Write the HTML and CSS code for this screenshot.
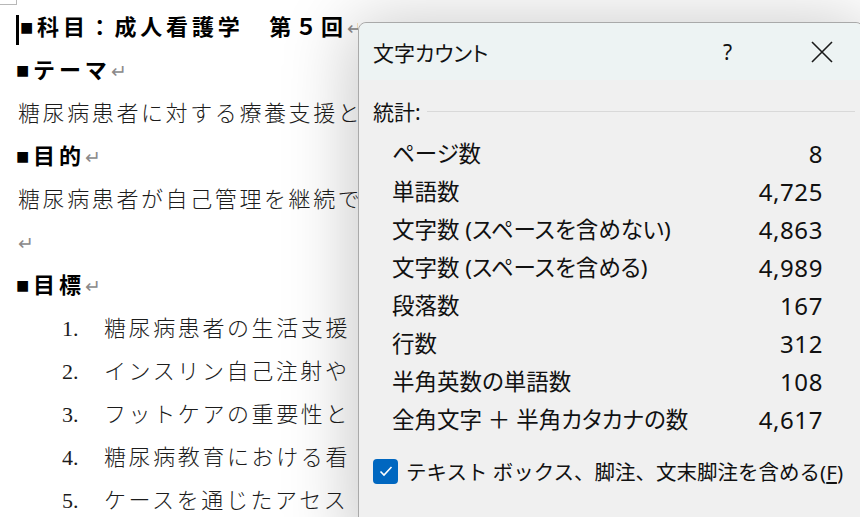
FILE: index.html
```html
<!DOCTYPE html>
<html>
<head>
  <title>文字カウント</title>
  <link rel="stylesheet" href="styles.css">
</head>
<body>
  <div id="document">
    <div class="crop-mark"></div>
    <p class="line heading"><span class="caret"></span>■科目：成人看護学　第５回<span class="pm">↵</span></p>
    <p class="line heading">■テーマ<span class="pm">↵</span></p>
    <p class="line">糖尿病患者に対する療養支援と</p>
    <p class="line heading">■目的<span class="pm">↵</span></p>
    <p class="line">糖尿病患者が自己管理を継続で</p>
    <p class="line"><span class="pm">↵</span></p>
    <p class="line heading">■目標<span class="pm">↵</span></p>
    <ol class="goals">
      <li class="line"><span class="num">1.</span>糖尿病患者の生活支援</li>
      <li class="line"><span class="num">2.</span>インスリン自己注射や</li>
      <li class="line"><span class="num">3.</span>フットケアの重要性と</li>
      <li class="line"><span class="num">4.</span>糖尿病教育における看</li>
      <li class="line"><span class="num">5.</span>ケースを通じたアセス</li>
    </ol>
  </div>

  <div id="dialog">
    <div class="titlebar">
      <span class="title">文字カウント</span>
      <span class="help">?</span>
      <svg class="close" width="24" height="24" viewBox="0 0 24 24">
        <path d="M2 2 L22 22 M22 2 L2 22" stroke="#1a1a1a" stroke-width="1.6" fill="none"/>
      </svg>
    </div>
    <div class="dialog-body">
      <div class="group-head"><span>統計:</span><div class="rule"></div></div>
      <ul class="stats">
        <li><span>ページ数</span><span class="val">8</span></li>
        <li><span>単語数</span><span class="val">4,725</span></li>
        <li><span>文字数 (スペースを含めない)</span><span class="val">4,863</span></li>
        <li><span>文字数 (スペースを含める)</span><span class="val">4,989</span></li>
        <li><span>段落数</span><span class="val">167</span></li>
        <li><span>行数</span><span class="val">312</span></li>
        <li><span>半角英数の単語数</span><span class="val">108</span></li>
        <li><span>全角文字 ＋ 半角カタカナの数</span><span class="val">4,617</span></li>
      </ul>
      <label class="check">
        <span class="box">
          <svg width="14" height="12" viewBox="0 0 14 12"><path d="M1.5 6.5 L5 10 L12.5 2" stroke="#fff" stroke-width="1.6" fill="none"/></svg>
        </span>
        <span class="check-text">テキスト ボックス、脚注、文末脚注を含める(<u>F</u>)</span>
      </label>
    </div>
  </div>
</body>
</html>
```

FILE: styles.css
```css
/* page behind the dialog */
body {
  margin: 0;
  padding: 0;
  width: 860px;
  height: 517px;
  overflow: hidden;
  position: relative;
  background-color: #ffffff;
  font-family: "Liberation Serif", "Noto Sans CJK JP", serif;
}

#document {
  width: 342px;
  height: 517px;
  overflow: hidden;
  padding: 6px 0 0 16px;
  color: #1c1c1c;
}

.crop-mark {
  position: absolute;
  left: -1px;
  top: -1px;
  width: 16px;
  height: 4px;
  border: 1px solid #b8b8b8;
}

.line {
  margin: 0;
  height: 43px;
  line-height: 43px;
  font-size: 22px;
  letter-spacing: 2.6px;
  white-space: nowrap;
  font-weight: 300;
}

.line:not(.heading) {
  padding-left: 2px;
}

.heading {
  font-weight: bold;
  color: #000;
  letter-spacing: 3.8px;
}

.caret {
  display: inline-block;
  width: 3px;
  height: 30px;
  margin-right: 1px;
  background-color: #000;
  vertical-align: middle;
}

.pm {
  color: #8a8a8a;
  font-size: 19px;
  font-weight: normal;
  letter-spacing: 0;
}

.goals {
  list-style: none;
  margin: 0;
  padding: 0 0 0 44px;
}

.goals .num {
  display: inline-block;
  width: 42px;
  letter-spacing: 0;
  font-family: "Liberation Serif", serif;
}

/* word count dialog */
#dialog {
  position: absolute;
  left: 358px;
  top: 22px;
  width: 504px;
  height: 520px;
  background-color: #f0f0f0;
  border: 1px solid #a9a9a9;
  border-radius: 8px;
  box-shadow: 0 6px 70px 6px rgba(0, 0, 0, 0.22);
  font-family: "Noto Sans", "Noto Sans CJK JP", sans-serif;
  font-feature-settings: "palt";
  color: #111;
  overflow: hidden;
}

.titlebar {
  display: flex;
  align-items: center;
  height: 57px;
  padding-left: 14px;
  background-color: #edf3f3;
  border-radius: 8px 8px 0 0;
}

.title {
  font-size: 21px;
  flex: 1;
}

.help {
  font-size: 21px;
  margin-right: 78px;
}

.close {
  margin-right: 29px;
}

.group-head {
  display: flex;
  align-items: center;
  height: 38px;
  margin-top: 12px;
  padding-left: 14px;
  font-size: 21px;
}

.group-head .rule {
  flex: 1;
  height: 1px;
  margin: 0 8px 0 6px;
  background-color: #d9d9d9;
}

.stats {
  list-style: none;
  margin: 5px 0 0 0;
  padding: 0 40px 0 33px;
}

.stats li {
  display: flex;
  justify-content: space-between;
  height: 38px;
  line-height: 38px;
  font-size: 22.5px;
}

.stats .val {
  font-size: 24px;
  letter-spacing: 0.6px;
}

.check {
  display: flex;
  align-items: center;
  margin-top: 17px;
  padding-left: 14px;
  font-size: 20.5px;
}

.check-text {
  font-feature-settings: normal;
}

.check .box {
  display: flex;
  align-items: center;
  justify-content: center;
  width: 25px;
  height: 25px;
  margin-right: 8px;
  border-radius: 4px;
  background-color: #0067c0;
}
```
